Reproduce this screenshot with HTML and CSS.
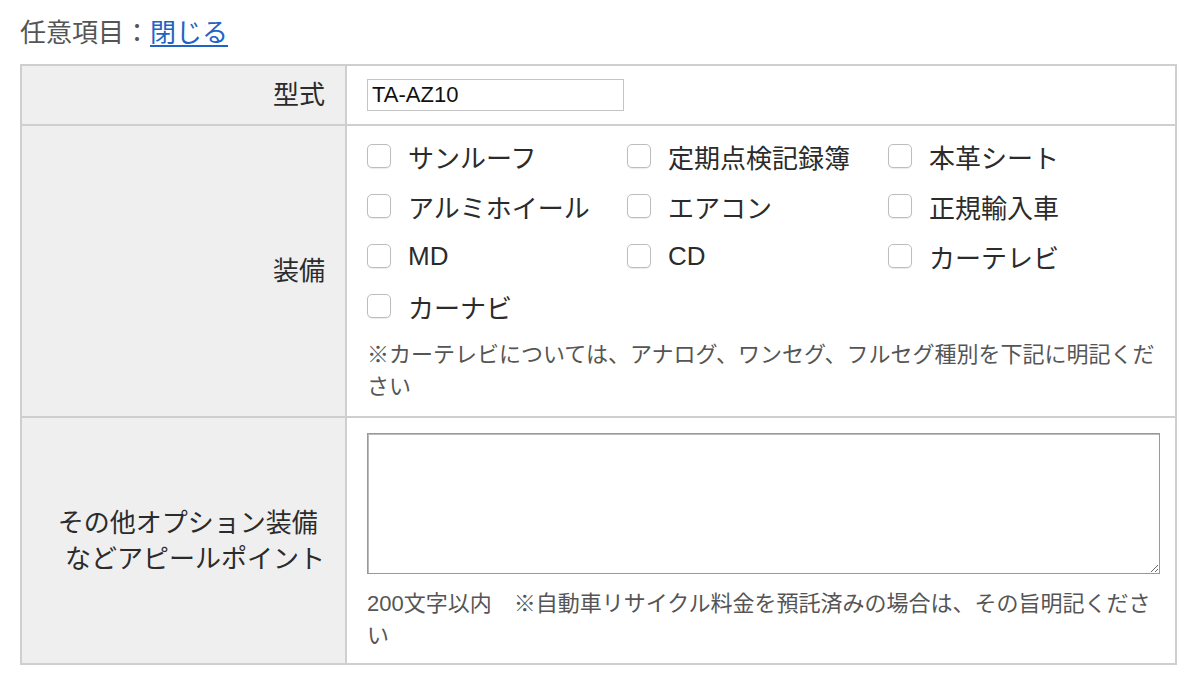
FILE: index.html
```html
<!DOCTYPE html>
<html lang="ja">
<head>
<meta charset="utf-8">
<title>任意項目</title>
<link rel="stylesheet" href="styles.css">
</head>
<body>
<div class="page">
  <p class="section-title">任意項目：<a href="#" class="toggle-link">閉じる</a></p>
  <table class="form-table">
    <colgroup>
      <col class="col-label">
      <col class="col-value">
    </colgroup>
    <tr class="row-model">
      <th class="label">型式</th>
      <td class="value"><input class="text-input" type="text" value="TA-AZ10"></td>
    </tr>
    <tr class="row-equip">
      <th class="label">装備</th>
      <td class="value value-equip">
        <div class="check-grid">
          <label class="check"><input type="checkbox" class="box"><span>サンルーフ</span></label>
          <label class="check"><input type="checkbox" class="box"><span>定期点検記録簿</span></label>
          <label class="check"><input type="checkbox" class="box"><span>本革シート</span></label>
          <label class="check"><input type="checkbox" class="box"><span>アルミホイール</span></label>
          <label class="check"><input type="checkbox" class="box"><span>エアコン</span></label>
          <label class="check"><input type="checkbox" class="box"><span>正規輸入車</span></label>
          <label class="check"><input type="checkbox" class="box"><span>MD</span></label>
          <label class="check"><input type="checkbox" class="box"><span>CD</span></label>
          <label class="check"><input type="checkbox" class="box"><span>カーテレビ</span></label>
          <label class="check"><input type="checkbox" class="box"><span>カーナビ</span></label>
        </div>
        <p class="note">※カーテレビについては、アナログ、ワンセグ、フルセグ種別を下記に明記ください</p>
      </td>
    </tr>
    <tr class="row-appeal">
      <th class="label label-multi">その他オプション装備&nbsp;<br>などアピールポイント</th>
      <td class="value value-appeal">
        <textarea class="textarea"></textarea>
        <p class="note note-appeal">200文字以内　※自動車リサイクル料金を預託済みの場合は、その旨明記ください</p>
      </td>
    </tr>
  </table>
</div>
</body>
</html>
```

FILE: styles.css
```css
html, body {
  margin: 0;
  padding: 0;
  background: #fff;
}
body {
  font-family: "Liberation Sans", "Noto Sans CJK JP", sans-serif;
  color: #333;
}
.page {
  padding: 13px 0 0 20px;
}
.section-title {
  margin: 0 0 11px 0;
  font-size: 26px;
  line-height: 40px;
  color: #555;
}
.toggle-link {
  color: #2163c4;
  text-decoration: underline;
  text-underline-offset: 3px;
}
.form-table {
  width: 1157px;
  border-collapse: collapse;
  table-layout: fixed;
  border: 2px solid #cfcfcf;
}
.col-label {
  width: 325px;
}
.form-table th,
.form-table td {
  border: 2px solid #cfcfcf;
}
.label {
  background: #efefef;
  font-weight: normal;
  font-size: 26px;
  line-height: 36px;
  text-align: right;
  vertical-align: middle;
  padding: 0 20px;
  color: #2b2b2b;
}
.value {
  background: #fff;
  padding: 12px 15px 12px 20px;
  vertical-align: top;
}
.row-model .value {
  padding-top: 13px;
  padding-bottom: 13px;
}
.text-input {
  display: block;
  box-sizing: border-box;
  width: 257px;
  height: 32px;
  margin: 0;
  padding: 0 4px;
  border: 1px solid #c4c4c4;
  font-family: "Liberation Sans", "Noto Sans CJK JP", sans-serif;
  font-size: 22px;
  color: #111;
  background: #fff;
}
.value-equip {
  padding-top: 5px;
  padding-bottom: 13px;
}
.check-grid {
  display: grid;
  grid-template-columns: 260px 261px 260px;
  grid-auto-rows: 50px;
}
.check {
  display: flex;
  align-items: center;
  gap: 17px;
  font-size: 26px;
  color: #2b2b2b;
}
.box {
  appearance: none;
  -webkit-appearance: none;
  box-sizing: border-box;
  width: 24px;
  height: 24px;
  margin: 0;
  border: 1px solid #bdbdbd;
  border-radius: 5px;
  background: #fff;
  box-shadow: 0 1px 1px rgba(0,0,0,0.08);
  flex: none;
}
.note {
  margin: 8px 0 0 0;
  font-size: 22px;
  line-height: 32px;
  color: #555;
}
.value-appeal {
  padding-top: 15px;
  padding-bottom: 11px;
}
.textarea {
  display: block;
  box-sizing: border-box;
  width: 793px;
  height: 141px;
  margin: 0;
  border: 1px solid #999;
  box-shadow: inset 1px 1px 0 #bbb;
  font-family: "Liberation Sans", "Noto Sans CJK JP", sans-serif;
  font-size: 20px;
}
.note-appeal {
  margin-top: 14px;
}
```
